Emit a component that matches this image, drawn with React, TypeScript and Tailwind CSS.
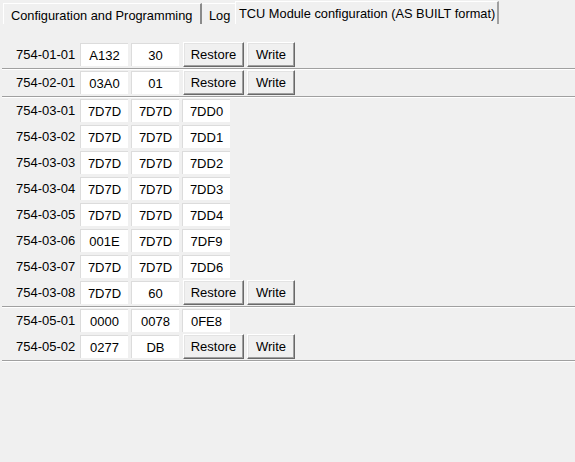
import React from 'react'

type Row = {
  id: string
  values: string[]
  editable?: boolean
}

const groups: Row[][] = [
  [{ id: '754-01-01', values: ['A132', '30'], editable: true }],
  [{ id: '754-02-01', values: ['03A0', '01'], editable: true }],
  [
    { id: '754-03-01', values: ['7D7D', '7D7D', '7DD0'] },
    { id: '754-03-02', values: ['7D7D', '7D7D', '7DD1'] },
    { id: '754-03-03', values: ['7D7D', '7D7D', '7DD2'] },
    { id: '754-03-04', values: ['7D7D', '7D7D', '7DD3'] },
    { id: '754-03-05', values: ['7D7D', '7D7D', '7DD4'] },
    { id: '754-03-06', values: ['001E', '7D7D', '7DF9'] },
    { id: '754-03-07', values: ['7D7D', '7D7D', '7DD6'] },
    { id: '754-03-08', values: ['7D7D', '60'], editable: true },
  ],
  [
    { id: '754-05-01', values: ['0000', '0078', '0FE8'] },
    { id: '754-05-02', values: ['0277', 'DB'], editable: true },
  ],
]

function ClassicButton({ label, className }: { label: string; className: string }) {
  return (
    <button
      className={`h-[25px] border border-t-white border-l-white border-r-[#696969] border-b-[#696969] bg-[#f0f0f0] shadow-[inset_-1px_-1px_#a0a0a0,inset_1px_1px_#e3e3e3] text-black ${className}`}
    >
      {label}
    </button>
  )
}

function ValueBox({ value }: { value: string }) {
  return (
    <div className="flex h-[23px] w-[48px] items-center justify-center border-t border-l border-[#dcdcdc] bg-white">
      {value}
    </div>
  )
}

export default function App() {
  return (
    <div className="h-[462px] w-[575px] overflow-hidden bg-[#f0f0f0] font-['Liberation_Sans',Arial,sans-serif] text-[13px] leading-[13px] text-black">
      {/* tab strip */}
      <div className="flex h-[24px] items-end text-[12.8px]">
        <div className="ml-[3px] h-[21px] w-[199px] border-t border-l border-white border-r-2 border-r-[#8a8a8a] pl-[7px] pt-[5px] whitespace-nowrap">
          Configuration and Programming
        </div>
        <div className="h-[21px] w-[33px] border-t border-white pl-[7px] pt-[5px]">Log</div>
        <div className="h-[23px] w-[264px] border-t border-l border-white border-r-2 border-r-[#a0a0a0] pl-[3px] pt-[5px] whitespace-nowrap">
          TCU Module configuration (AS BUILT format)
        </div>
      </div>

      <div className="ml-[2px] pt-[18px]">
        {groups.map((group, gi) => (
          <div key={gi}>
            <div className="flex flex-col gap-[1px] border-b border-[#a0a0a0] pb-[1px]">
              {group.map((row) => (
                <div key={row.id} className="flex h-[25px] items-center gap-[3px]">
                  <div className="w-[75px] pl-[14px]">{row.id}</div>
                  {row.values.map((v, i) => (
                    <ValueBox key={i} value={v} />
                  ))}
                  {row.editable && (
                    <>
                      <ClassicButton label="Restore" className="ml-[1px] w-[61px]" />
                      <ClassicButton label="Write" className="w-[48px]" />
                    </>
                  )}
                </div>
              ))}
            </div>
            <div className="h-px bg-white" />
          </div>
        ))}
      </div>
    </div>
  )
}
